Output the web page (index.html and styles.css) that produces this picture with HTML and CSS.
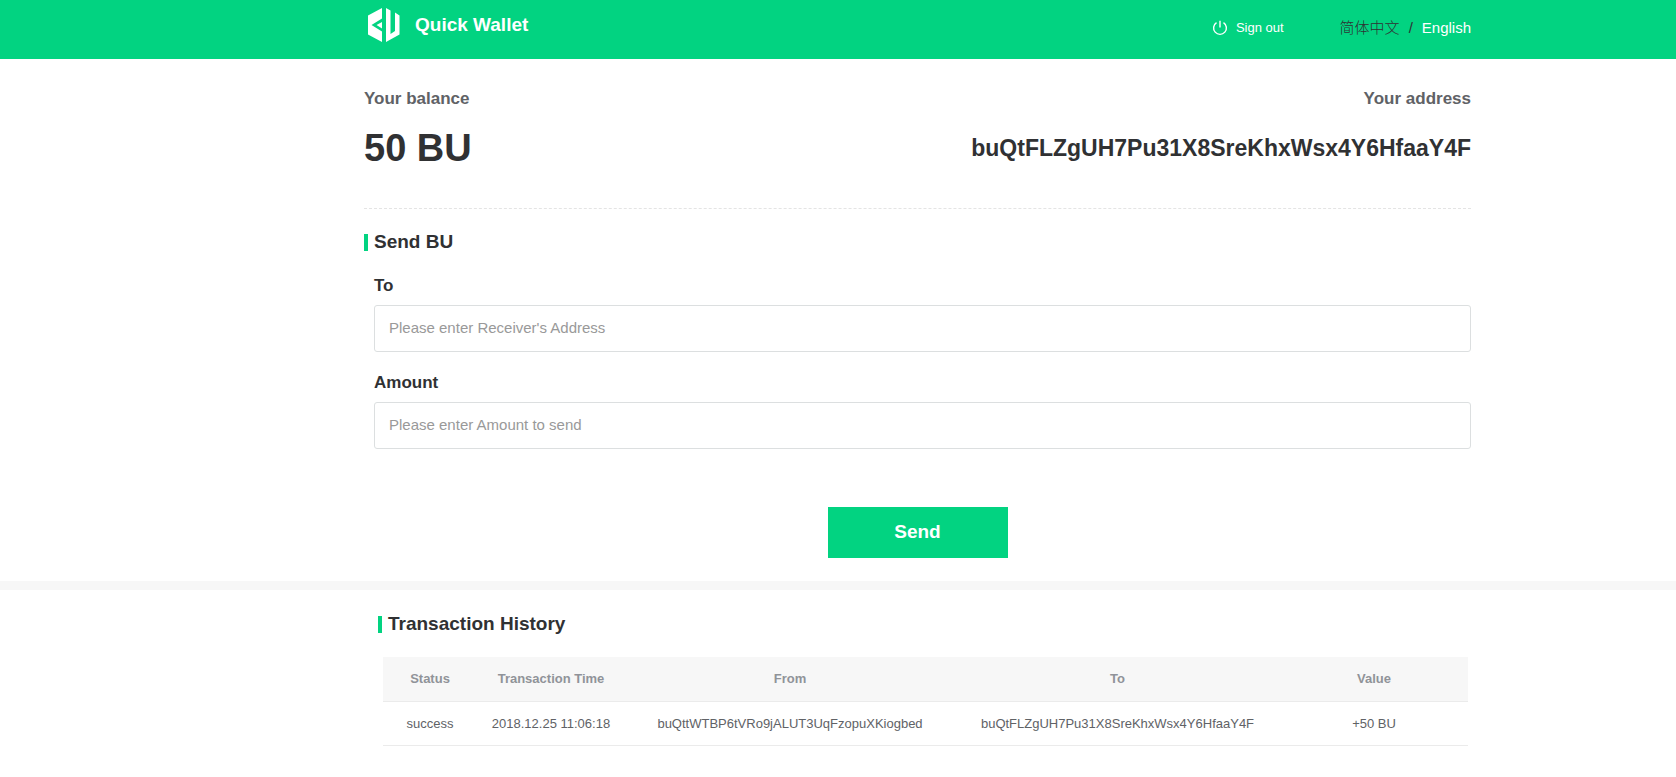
FILE: index.html
```html
<!DOCTYPE html>
<html lang="en">
<head>
<meta charset="utf-8">
<title>Quick Wallet</title>
<link rel="stylesheet" href="styles.css">
</head>
<body>
<header class="topbar">
  <div class="container topbar-inner">
    <div class="brand">
      <svg class="logo" viewBox="0 0 32 36" aria-hidden="true">
        <path fill="#fff" d="M14 1V11.5L3.5 18L14 24.5V35L0 27.5V8.5ZM14 15V21.5L8.5 18Z"/>
        <path fill="#fff" d="M18 1L22.5 3.500V27L27 24V5.500L31.500 8.500V27.500L18 35Z"/>
      </svg>
      <span class="brand-name">Quick Wallet</span>
    </div>
    <nav class="actions">
      <a class="signout" href="#">
        <svg class="power" viewBox="0 0 16 16" aria-hidden="true">
          <path d="M4.500 2.600A6.400 6.400 0 1 0 11.500 2.600M8 .8V7.500" fill="none" stroke="#fff" stroke-width="1.4"/>
        </svg>
        <span>Sign out</span>
      </a>
      <div class="langs">
        <a class="lang lang-zh" href="#" lang="zh">简体中文</a>
        <span class="slash">/</span>
        <a class="lang lang-active" href="#">English</a>
      </div>
    </nav>
  </div>
</header>
<main>
  <div class="container">
    <section class="account">
      <div>
        <h2 class="caption">Your balance</h2>
        <p class="balance">50 BU</p>
      </div>
      <div class="account-right">
        <h2 class="caption">Your address</h2>
        <p class="address">buQtFLZgUH7Pu31X8SreKhxWsx4Y6HfaaY4F</p>
      </div>
    </section>
    <section class="send">
      <h2 class="title">Send BU</h2>
      <form class="form">
        <label class="label" for="to">To</label>
        <input class="field" id="to" type="text" placeholder="Please enter Receiver's Address">
        <label class="label" for="amount">Amount</label>
        <input class="field" id="amount" type="text" placeholder="Please enter Amount to send">
      </form>
      <button class="submit" type="button">Send</button>
    </section>
  </div>
  <div class="band"></div>
  <div class="container">
    <section class="history">
      <h2 class="title">Transaction History</h2>
      <div class="table-wrap">
        <table class="table">
          <colgroup>
            <col class="c-status"><col class="c-time"><col class="c-from"><col class="c-to"><col class="c-value">
          </colgroup>
          <thead>
            <tr><th>Status</th><th>Transaction Time</th><th>From</th><th>To</th><th>Value</th></tr>
          </thead>
          <tbody>
            <tr><td>success</td><td>2018.12.25 11:06:18</td><td>buQttWTBP6tVRo9jALUT3UqFzopuXKiogbed</td><td>buQtFLZgUH7Pu31X8SreKhxWsx4Y6HfaaY4F</td><td>+50 BU</td></tr>
          </tbody>
        </table>
      </div>
    </section>
  </div>
</main>
</body>
</html>
```
FILE: styles.css
```css
* { box-sizing: border-box; }
body {
  margin: 0;
  background: #fff;
  color: #303133;
  font-family: "Liberation Sans", "Noto Sans CJK SC", sans-serif;
}
h2, p { margin: 0; }
a { text-decoration: none; }

.topbar {
  background: #02d381;
  color: #fff;
}
.container {
  margin: 0 205px 0 364px;
}
.topbar-inner {
  display: flex;
  justify-content: space-between;
  height: 59px;
}
.brand {
  display: flex;
  align-items: center;
  gap: 15px;
  height: 50px;
  padding-left: 4px;
}
.logo { width: 32px; height: 36px; }
.brand-name { font-size: 19px; font-weight: bold; }
.actions {
  display: flex;
  align-items: center;
  gap: 56px;
  height: 55px;
}
.signout {
  display: flex;
  align-items: center;
  gap: 8px;
  color: #fff;
  font-size: 13px;
}
.power { width: 16px; height: 16px; }
.langs {
  display: flex;
  align-items: center;
  gap: 9px;
  font-size: 15px;
}
.lang, .slash { color: #303133; }
.lang-zh { font-weight: 300; line-height: 20px; }
.lang-active { color: #fff; }

.account {
  display: flex;
  justify-content: space-between;
  padding: 29px 0 38px;
  border-bottom: 1px dashed #e4e4e4;
}
.account-right { text-align: right; }
.caption {
  color: #606266;
  font-size: 17px;
  line-height: 22px;
}
.balance, .address {
  margin-top: 16px;
  font-weight: bold;
  line-height: 44px;
}
.balance { font-size: 38px; }
.address { font-size: 23px; }

.send { padding: 20px 0 23px; }
.title {
  display: flex;
  align-items: center;
  gap: 6px;
  font-size: 19px;
  line-height: 26px;
}
.title::before {
  content: "";
  width: 4px;
  height: 17px;
  background: #02d381;
}
.form { padding-left: 10px; }
.label {
  display: block;
  margin-top: 20px;
  font-size: 17px;
  font-weight: bold;
  line-height: 22px;
}
.field {
  display: block;
  width: 100%;
  height: 47px;
  margin-top: 8px;
  padding: 0 14px 2px;
  border: 1px solid #dcdfe0;
  border-radius: 3px;
  background: #fff;
  color: #303133;
  font: 15px "Liberation Sans", sans-serif;
}
.field::placeholder { color: #999; opacity: 1; }
.submit {
  display: block;
  width: 180px;
  height: 51px;
  margin: 58px auto 0;
  padding: 0 0 2px;
  border: 0;
  background: #02d381;
  color: #fff;
  font: bold 19px "Liberation Sans", sans-serif;
}

.band { height: 9px; background: #f7f7f7; }
.history { padding: 21px 0 32px 14px; }
.table-wrap { padding: 20px 3px 0 5px; }
.table {
  width: 100%;
  border-collapse: collapse;
  table-layout: fixed;
  font-size: 13px;
  text-align: center;
}
.table th, .table td {
  height: 44px;
  padding: 0;
  border-bottom: 1px solid #ebebeb;
}
.table th { background: #f7f7f7; color: #909399; }
.table td { color: #606266; }
.c-status { width: 94px; }
.c-time { width: 148px; }
.c-from { width: 330px; }
.c-to { width: 325px; }
.c-value { width: 188px; }
```
